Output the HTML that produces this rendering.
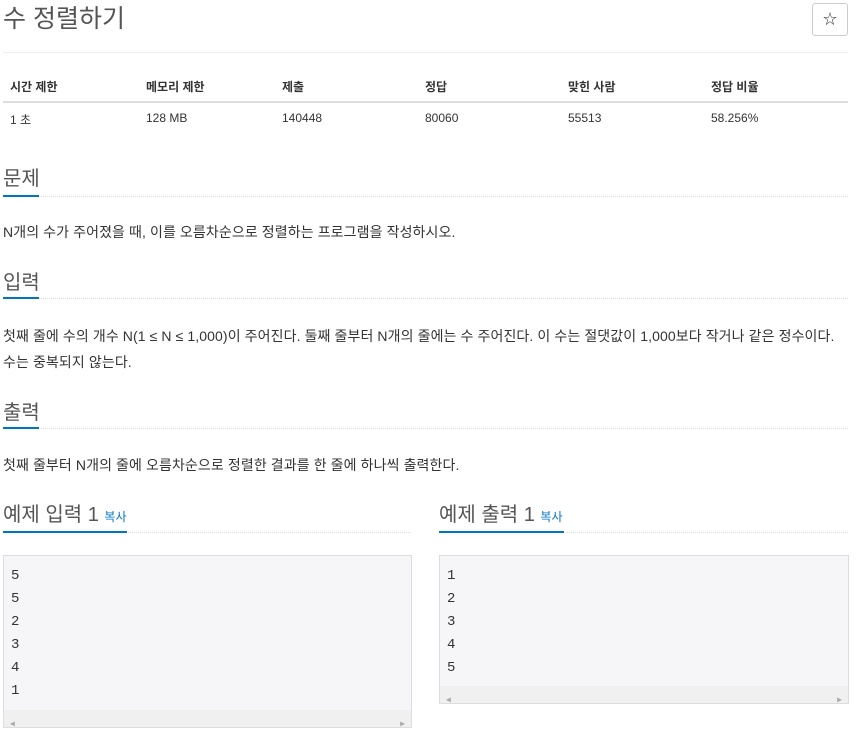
<!DOCTYPE html>
<html><head><meta charset="utf-8"><style>
body{margin:0;background:#fff;font-family:"Liberation Sans","Noto Sans CJK KR",sans-serif;color:#333;width:868px;height:737px;overflow:hidden;position:relative}
.a{position:absolute}
h1{position:absolute;left:3px;top:0;margin:0;font-size:25px;font-weight:400;line-height:38px;color:#555}
.star{left:812px;top:3px;width:34px;height:31px;border:1px solid #ccc;border-radius:3px;text-align:center;line-height:31px;font-size:14px;color:#333}
.hr{left:3px;width:845px;height:1px;background:#eee}
.th{font-size:12px;font-weight:700;color:#333;top:78px}
.td{font-size:12px;color:#333;top:111px}
.sec{left:3px;font-size:20px;color:#555;font-weight:400}
.uline{height:2px;background:#0076c0}
.dot{height:0;border-top:1px dotted #ddd}
.p{left:3px;font-size:14px;letter-spacing:0.1px;color:#333;line-height:26px;white-space:nowrap}
pre{position:absolute;margin:0;background:#f6f6f8;border:1px solid #ddd;font-family:"Liberation Mono","DejaVu Sans Mono",monospace;font-size:14px;line-height:23px;color:#333;padding:9px 7px;box-sizing:border-box}
.sb{position:absolute;left:0;right:0;bottom:0;height:17px;background:#f0f0f0;color:#aaa;font-size:8px}
.copy{font-size:12px;color:#0076c0}
</style></head><body>
<h1>수 정렬하기</h1>
<div class="a star">☆</div>
<div class="a hr" style="top:52px"></div>
<div class="a th" style="left:10px">시간 제한</div>
<div class="a th" style="left:146px">메모리 제한</div>
<div class="a th" style="left:282px">제출</div>
<div class="a th" style="left:425px">정답</div>
<div class="a th" style="left:568px">맞힌 사람</div>
<div class="a th" style="left:711px">정답 비율</div>
<div class="a" style="left:3px;top:101px;width:845px;height:2px;background:#ddd"></div>
<div class="a td" style="left:10px">1 초</div>
<div class="a td" style="left:146px">128 MB</div>
<div class="a td" style="left:282px">140448</div>
<div class="a td" style="left:425px">80060</div>
<div class="a td" style="left:568px">55513</div>
<div class="a td" style="left:711px">58.256%</div>

<div class="a sec" style="top:162px">문제</div>
<div class="a dot" style="left:3px;top:196px;width:845px"></div>
<div class="a uline" style="left:3px;top:195px;width:36px"></div>
<div class="a p" style="top:219px">N개의 수가 주어졌을 때, 이를 오름차순으로 정렬하는 프로그램을 작성하시오.</div>

<div class="a sec" style="top:266px">입력</div>
<div class="a dot" style="left:3px;top:298px;width:845px"></div>
<div class="a uline" style="left:3px;top:297px;width:36px"></div>
<div class="a p" style="top:323px">첫째 줄에 수의 개수 N(1 ≤ N ≤ 1,000)이 주어진다. 둘째 줄부터 N개의 줄에는 수 주어진다. 이 수는 절댓값이 1,000보다 작거나 같은 정수이다.<br>수는 중복되지 않는다.</div>

<div class="a sec" style="top:396px">출력</div>
<div class="a dot" style="left:3px;top:428px;width:845px"></div>
<div class="a uline" style="left:3px;top:427px;width:36px"></div>
<div class="a p" style="top:452px">첫째 줄부터 N개의 줄에 오름차순으로 정렬한 결과를 한 줄에 하나씩 출력한다.</div>

<div class="a sec" style="top:498px">예제 입력 1 <span class="copy">복사</span></div>
<div class="a dot" style="left:3px;top:532px;width:408px"></div>
<div class="a uline" style="left:3px;top:531px;width:124px"></div>
<div class="a sec" style="top:498px;left:439px">예제 출력 1 <span class="copy">복사</span></div>
<div class="a dot" style="left:439px;top:532px;width:409px"></div>
<div class="a uline" style="left:439px;top:531px;width:125px"></div>

<pre style="left:3px;top:555px;width:409px;height:173px">5
5
2
3
4
1<div class="sb"><span style="position:absolute;left:6px;top:3px">◀</span><span style="position:absolute;right:6px;top:3px">▶</span></div></pre>
<pre style="left:439px;top:555px;width:410px;height:149px">1
2
3
4
5<div class="sb"><span style="position:absolute;left:6px;top:3px">◀</span><span style="position:absolute;right:6px;top:3px">▶</span></div></pre>
</body></html>
